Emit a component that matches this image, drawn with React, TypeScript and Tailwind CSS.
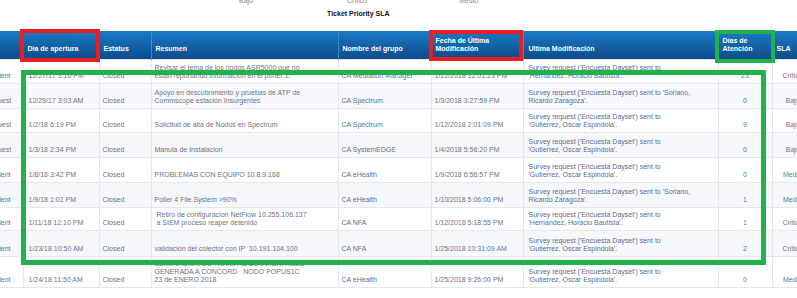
import React from "react";

type Row = {
  tipo: string;
  apertura: string;
  resumen: string[];
  grupo: string;
  fecha: string;
  ultima: string[];
  dias: string;
  sla: string;
  h: number;
};

const G = "'Gutierrez, Oscar Espindola'.";
const S1 = "Survey request ('Encuesta Dayset') sent to";

const rows: Row[] = [
  {
    tipo: "Incident",
    apertura: "12/27/17 3:16 PM",
    resumen: ["Revisar el tema de los nodos ASR5000 que no", "estan reportando informacion en el poner 1."],
    grupo: "CA Mediation Manager",
    fecha: "1/12/2018 12:01:23 PM",
    ultima: [S1, "'Hernandez, Horacio Bautista'."],
    dias: "23",
    sla: "Crítico",
    h: 24,
  },
  {
    tipo: "Request",
    apertura: "12/29/17 3:03 AM",
    resumen: ["Apoyo en descubrimiento y pruebas de ATP de", "Commscope estación Insurgentes"],
    grupo: "CA Spectrum",
    fecha: "1/3/2018 3:27:59 PM",
    ultima: [S1 + " 'Soriano,", "Ricardo Zaragoza'."],
    dias: "0",
    sla: "Bajo",
    h: 25,
  },
  {
    tipo: "Request",
    apertura: "1/2/18 6:19 PM",
    resumen: ["Solicitud de alta de Nodos en Spectrum"],
    grupo: "CA Spectrum",
    fecha: "1/12/2018 2:01:09 PM",
    ultima: [S1, G],
    dias: "9",
    sla: "Bajo",
    h: 24,
  },
  {
    tipo: "Request",
    apertura: "1/3/18 2:34 PM",
    resumen: ["Manula de Instalacion"],
    grupo: "CA SystemEDGE",
    fecha: "1/4/2018 5:56:20 PM",
    ultima: [S1, G],
    dias: "0",
    sla: "Bajo",
    h: 25,
  },
  {
    tipo: "Incident",
    apertura: "1/8/18 3:42 PM",
    resumen: ["PROBLEMAS CON EQUIPO 10.8.9.168"],
    grupo: "CA eHealth",
    fecha: "1/9/2018 6:56:57 PM",
    ultima: [S1, G],
    dias: "0",
    sla: "Medio",
    h: 25,
  },
  {
    tipo: "Incident",
    apertura: "1/9/18 1:01 PM",
    resumen: ["Poller 4 File System >90%"],
    grupo: "CA eHealth",
    fecha: "1/10/2018 5:06:00 PM",
    ultima: [S1 + " 'Soriano,", "Ricardo Zaragoza'."],
    dias: "1",
    sla: "Medio",
    h: 25,
  },
  {
    tipo: "Incident",
    apertura: "1/11/18 12:10 PM",
    resumen: [" Retiro de configuracion NetFlow 10.255.106.137", " a SIEM proceso reaper detenido"],
    grupo: "CA NFA",
    fecha: "1/12/2018 5:18:55 PM",
    ultima: [S1, "'Hernandez, Horacio Bautista'."],
    dias: "1",
    sla: "Crítico",
    h: 23,
  },
  {
    tipo: "Incident",
    apertura: "1/23/18 10:50 AM",
    resumen: ["validación del colector con IP  10.191.104.100"],
    grupo: "CA NFA",
    fecha: "1/25/2018 10:31:09 AM",
    ultima: [S1, G],
    dias: "2",
    sla: "Crítico",
    h: 26,
  },
  {
    tipo: "Incident",
    apertura: "1/24/18 11:50 AM",
    resumen: ["ELIMINACION DE TRAMPAS DE INTERFACES", "GENERADA A CONCORD   NODO POPUS1C", "23 de ENERO 2018"],
    grupo: "CA eHealth",
    fecha: "1/25/2018 9:26:00 PM",
    ultima: [S1, G],
    dias: "0",
    sla: "Medio",
    h: 31,
  },
];

const th = "align-bottom text-left font-bold text-white px-[4px] pb-[6px] border-l border-[#3f8ccc] first:border-l-0";
const td = "align-bottom border border-[#e4e8eb] px-[3px] pb-[3px] whitespace-pre";

export default function App() {
  return (
    <div className="relative w-[797px] h-[298px] overflow-hidden bg-white text-[7px] leading-[8px] font-['Liberation_Sans',Arial,sans-serif]">
      <div className="h-[31px] overflow-hidden">
        <div className="flex pl-[239px] -mt-[3px] text-[#8a8a8a]">
          <span className="w-[108px]">Bajo</span>
          <span className="w-[112px]">Crítico</span>
          <span>Medio</span>
        </div>
        <div className="pl-[327px] mt-[5px] font-bold text-[#111]">Ticket Priority SLA</div>
      </div>

      <table className="table-fixed border-collapse w-[813px] text-[#6f7384]">
        <colgroup>
          <col className="w-[23px]" />
          <col className="w-[76px]" />
          <col className="w-[52px]" />
          <col className="w-[187px]" />
          <col className="w-[93px]" />
          <col className="w-[92px]" />
          <col className="w-[195px]" />
          <col className="w-[54px]" />
          <col className="w-[41px]" />
        </colgroup>
        <thead>
          <tr className="h-[28px] bg-linear-to-b from-[#1b7bc4] to-[#0c4c8b]">
            <th className={th}></th>
            <th className={th}>Día de apertura</th>
            <th className={th}>Estatus</th>
            <th className={th}>Resumen</th>
            <th className={th}>Nombre del grupo</th>
            <th className={th}>
              Fecha de Última
              <br />
              Modificación
            </th>
            <th className={th + " pl-[5px]"}>Ultima Modificación</th>
            <th className={th}>
              Días de
              <br />
              Atención
            </th>
            <th className={th}>SLA</th>
          </tr>
        </thead>
        <tbody>
          {rows.map((r, i) => (
            <tr key={i} style={{ height: r.h }} className={i % 2 === 1 ? "bg-[#f5f9fb]" : "bg-white"}>
              <td className={td + " border-l-0 overflow-hidden"}>
                <div className={r.tipo === "Request" ? "-ml-[18px]" : "-ml-[17px]"}>{r.tipo}</div>
              </td>
              <td className={td + " pl-[5px]"}>{r.apertura}</td>
              <td className={td}>Closed</td>
              <td className={td}>
                {r.resumen.map((l, j) => (
                  <div key={j}>{l}</div>
                ))}
              </td>
              <td className={td + " overflow-hidden text-[#66708a]"}>{r.grupo}</td>
              <td className={td}>{r.fecha}</td>
              <td className={td + " pl-[5px] text-[#5f6a8c]"}>
                {r.ultima.map((l, j) => (
                  <div key={j}>{l}</div>
                ))}
              </td>
              <td className={td + " text-center text-[#5577aa]"}>{r.dias}</td>
              <td className={td + " text-center"}>{r.sla}</td>
            </tr>
          ))}
        </tbody>
      </table>

      {/* annotation boxes drawn over the table */}
      <div className="absolute left-[20px] top-[29px] w-[80px] h-[33px] border-[4px] border-[#ec1c24]" />
      <div className="absolute left-[429px] top-[30px] w-[94px] h-[31px] border-[4px] border-[#ec1c24]" />
      <div className="absolute left-[715px] top-[30px] w-[60px] h-[33px] border-[4px] border-[#22b24c]" />
      <div className="absolute left-[21px] top-[70px] w-[745px] h-[195px] border-[5px] border-[#22b24c]" />
    </div>
  );
}
